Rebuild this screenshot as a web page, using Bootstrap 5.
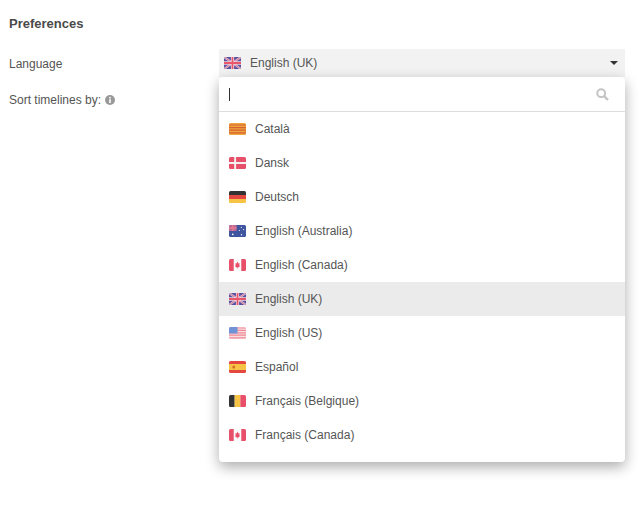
<!DOCTYPE html>
<html lang="en"><head><meta charset="utf-8"><title>Preferences</title>
<link href="https://cdn.jsdelivr.net/npm/bootstrap@5.3.0/dist/css/bootstrap.min.css" rel="stylesheet">
<style>
body{font-family:"Liberation Sans",Arial,sans-serif;font-size:12px;color:#555;background:#fff}
.pref-page{padding:16px 13px 0 9px}
.pref-title{font-size:13px;font-weight:700;line-height:16px;margin:0 0 17px;color:#4a4a4a}
.pref-label{width:210px;flex:none;line-height:28px;padding-top:1px}
.pref-row{height:28px}
.pref-row2{margin-top:8px}
.pref-wrap{flex:1 1 auto;position:relative}
.pref-select{height:28px;background:#f2f2f2;padding:0 7px 0 5px;gap:9px}
.pref-caret{width:0;height:0;border-left:4px solid transparent;border-right:4px solid transparent;border-top:4px solid #333;margin-left:auto}
.pref-menu{position:absolute;left:0;right:0;top:28px;background:#fff;border-radius:4px;box-shadow:0 5px 14px rgba(0,0,0,.33);padding-bottom:10px;z-index:5}
.pref-search{height:35px;border-bottom:1px solid #ddd;padding:0 16px 0 10px}
.pref-cursor{width:1px;height:13px;background:#333}
.pref-item{height:34px;padding:0 10px;gap:9px;color:#555}
.pref-item.pref-on{background:#ebebeb}
.pref-flag{width:17px;height:12px;flex:none;border-radius:1.5px;display:block;filter:blur(.35px)}
.pref-info{width:10px;height:10px;margin-left:4px;vertical-align:-1px}
</style></head><body>
<svg width="0" height="0" class="d-block position-absolute"><defs>
<symbol id="f-uk" viewBox="0 0 18 12" preserveAspectRatio="none"><rect width="18" height="12" fill="#5a4f9e"/><path d="M0 0L18 12M18 0L0 12" stroke="#d9c4d8" stroke-width="2.2"/><path d="M0 0L18 12M18 0L0 12" stroke="#d9708c" stroke-width=".9"/><path d="M9 0V12M0 6H18" stroke="#efd8e0" stroke-width="3.4"/><path d="M9 0V12M0 6H18" stroke="#e9566c" stroke-width="1.8"/></symbol>
<symbol id="f-ca" viewBox="0 0 18 12" preserveAspectRatio="none"><rect width="18" height="12" fill="#fafafa"/><rect width="5" height="12" fill="#e8506a"/><rect x="13" width="5" height="12" fill="#e8506a"/><path d="M9 2.5L10 4.5L11.3 4.2L10.8 6.5L12 6.7L10 8.4L9.3 8.2V9.5H8.7V8.2L8 8.4L6 6.7L7.2 6.5L6.7 4.2L8 4.5Z" fill="#e8506a"/></symbol>
</defs></svg>
<div class="pref-page min-vh-100">
<h1 class="pref-title">Preferences</h1>
<div class="d-flex pref-row">
<div class="pref-label">Language</div>
<div class="pref-wrap">
<div class="d-flex align-items-center pref-select">
<svg class="pref-flag"><use href="#f-uk"/></svg><span>English (UK)</span><span class="pref-caret"></span>
</div>
<div class="pref-menu">
<div class="d-flex align-items-center justify-content-between pref-search"><span class="pref-cursor"></span>
<svg width="13" height="13" viewBox="0 0 13 13" fill="none" stroke="#c4c4c4"><circle cx="5.2" cy="5.2" r="3.9" stroke-width="2"/><path d="M8 8L12 12" stroke-width="2.4"/></svg></div>
<div class="d-flex align-items-center pref-item"><svg class="pref-flag" viewBox="0 0 18 12" preserveAspectRatio="none"><rect width="18" height="12" fill="#f0a540"/><path d="M0 2H18M0 4.6H18M0 7.2H18M0 9.8H18" stroke="#d4612f" stroke-width="1.2"/></svg><span>Català</span></div>
<div class="d-flex align-items-center pref-item"><svg class="pref-flag" viewBox="0 0 18 12" preserveAspectRatio="none"><rect width="18" height="12" fill="#e8506a"/><path d="M6.5 0V12M0 6H18" stroke="#f6f0f0" stroke-width="2"/></svg><span>Dansk</span></div>
<div class="d-flex align-items-center pref-item"><svg class="pref-flag" viewBox="0 0 18 12" preserveAspectRatio="none"><rect width="18" height="4" fill="#333"/><rect y="4" width="18" height="4" fill="#e4473f"/><rect y="8" width="18" height="4" fill="#f6c344"/></svg><span>Deutsch</span></div>
<div class="d-flex align-items-center pref-item"><svg class="pref-flag" viewBox="0 0 18 12" preserveAspectRatio="none"><rect width="18" height="12" fill="#3f559f"/><rect width="8" height="6" fill="#b86c9a"/><path d="M0 3H8M4 0V6" stroke="#eb7a8e" stroke-width="1.3"/><g fill="#fff"><circle cx="4" cy="9.3" r=".9"/><circle cx="13" cy="2.3" r=".6"/><circle cx="15.5" cy="4.6" r=".6"/><circle cx="11" cy="5.5" r=".6"/><circle cx="13.2" cy="9.7" r=".7"/></g></svg><span>English (Australia)</span></div>
<div class="d-flex align-items-center pref-item"><svg class="pref-flag"><use href="#f-ca"/></svg><span>English (Canada)</span></div>
<div class="d-flex align-items-center pref-item pref-on"><svg class="pref-flag"><use href="#f-uk"/></svg><span>English (UK)</span></div>
<div class="d-flex align-items-center pref-item"><svg class="pref-flag" viewBox="0 0 18 12" preserveAspectRatio="none"><rect width="18" height="12" fill="#f8dfe1"/><path d="M0 1H18M0 3.4H18M0 5.8H18M0 8.2H18M0 10.8H18" stroke="#f08a98" stroke-width="1.2"/><rect width="9" height="6.5" fill="#6f93d6"/></svg><span>English (US)</span></div>
<div class="d-flex align-items-center pref-item"><svg class="pref-flag" viewBox="0 0 18 12" preserveAspectRatio="none"><rect width="18" height="12" fill="#e4473f"/><rect y="3" width="18" height="6" fill="#f6c344"/><circle cx="5" cy="6" r="1.5" fill="#d9682c"/></svg><span>Español</span></div>
<div class="d-flex align-items-center pref-item"><svg class="pref-flag" viewBox="0 0 18 12" preserveAspectRatio="none"><rect width="6" height="12" fill="#333"/><rect x="6" width="6" height="12" fill="#f6c344"/><rect x="12" width="6" height="12" fill="#e8506a"/></svg><span>Français (Belgique)</span></div>
<div class="d-flex align-items-center pref-item"><svg class="pref-flag"><use href="#f-ca"/></svg><span>Français (Canada)</span></div>
</div>
</div>
</div>
<div class="d-flex pref-row pref-row2"><div class="pref-label">Sort timelines by:<svg class="pref-info" viewBox="0 0 10 10"><circle cx="5" cy="5" r="5" fill="#999"/><rect x="4.2" y="4.2" width="1.6" height="3.8" fill="#fff"/><rect x="4.2" y="1.9" width="1.6" height="1.5" fill="#fff"/></svg></div></div>
</div>
</body></html>
